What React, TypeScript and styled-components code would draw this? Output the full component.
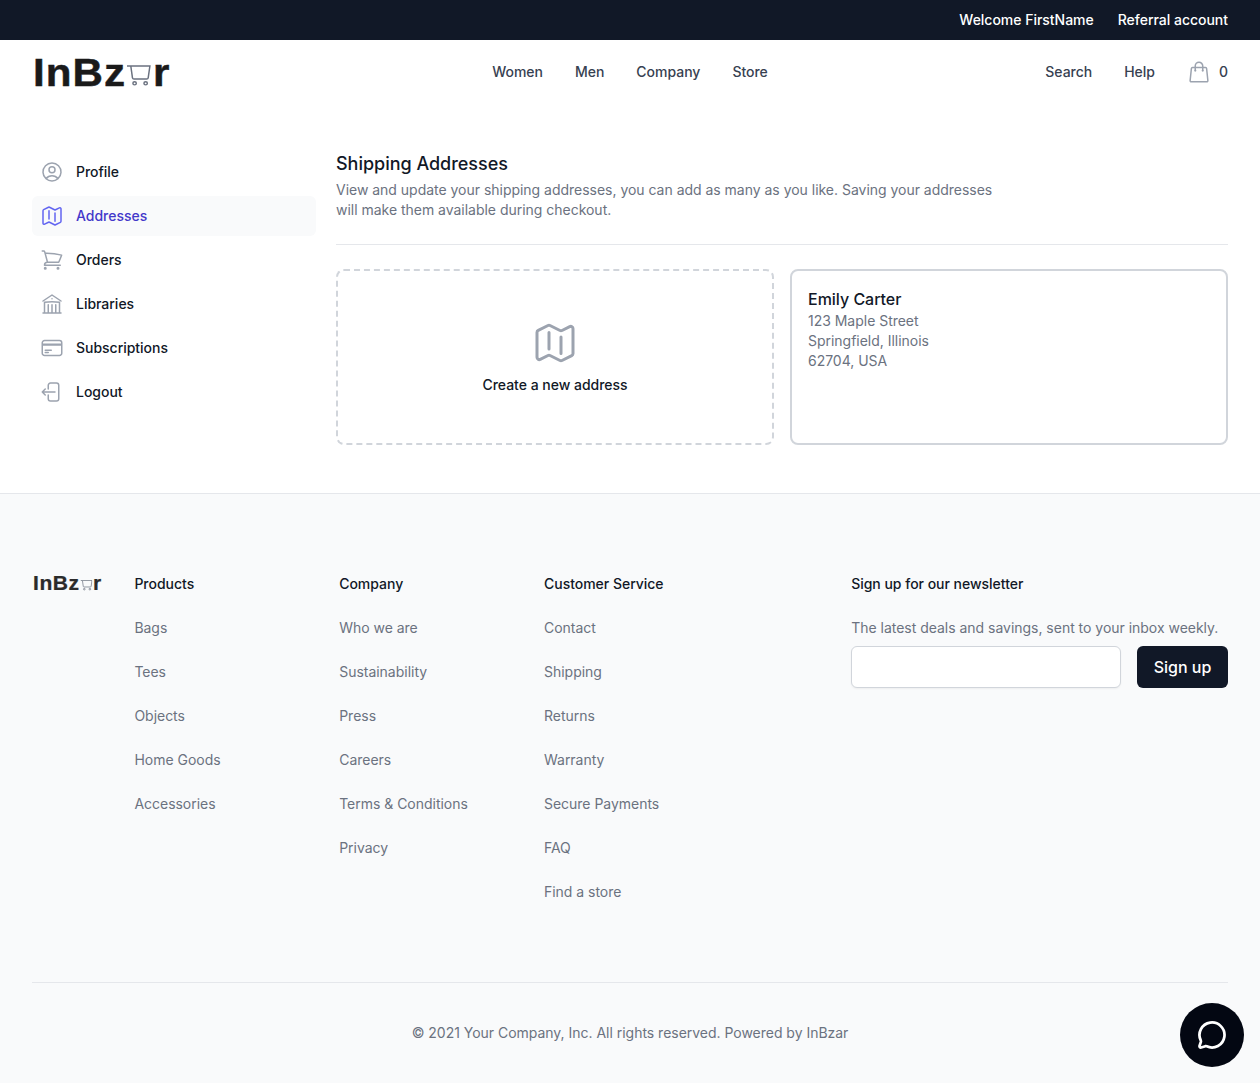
import styled, { createGlobalStyle } from 'styled-components';
import { MessageCircle } from 'lucide-react';
import {
  HiOutlineUserCircle,
  HiOutlineMap,
  HiOutlineShoppingCart,
  HiOutlineBuildingLibrary,
  HiOutlineCreditCard,
  HiOutlineArrowLeftStartOnRectangle,
  HiOutlineShoppingBag,
} from 'react-icons/hi2';

const GlobalStyle = createGlobalStyle`
  * { box-sizing: border-box; }
  body {
    margin: 0;
    background: #fff;
    font-family: Inter, "Liberation Sans", sans-serif;
    font-size: 14px;
    line-height: 20px;
    letter-spacing: -0.02px;
    color: #111827;
  }
  ul { list-style: none; margin: 0; padding: 0; }
  h1, h2, h3, p { margin: 0; }
`;

const TopBar = styled.div`
  height: 40px;
  background: #111827;
  display: flex;
  align-items: center;
  justify-content: flex-end;
  gap: 24px;
  padding: 0 32px;
  color: #fff;
  font-weight: 500;
`;

const Header = styled.header`
  height: 64px;
  padding: 0 32px;
  display: grid;
  grid-template-columns: 1fr auto 1fr;
  align-items: center;
`;

const NavGroup = styled.nav<{ $end?: boolean }>`
  display: flex;
  align-items: center;
  gap: 32px;
  font-weight: 500;
  color: #374151;
  justify-content: ${({ $end }) => ($end ? 'flex-end' : 'flex-start')};
`;

const Cart = styled.div`
  display: flex;
  align-items: center;
  gap: 8px;
  svg { color: #9ca3af; display: block; }
`;

const LogoMark = styled.div<{ $size: number; $tone: string }>`
  display: inline-flex;
  align-items: flex-end;
  font-family: "Liberation Sans", Arial, sans-serif;
  font-weight: 700;
  font-size: ${({ $size }) => $size}px;
  line-height: 1;
  letter-spacing: 0.025em;
  color: ${({ $tone }) => $tone};
  -webkit-text-stroke: 0.012em ${({ $tone }) => $tone};
  transform: scaleX(1.08);
  transform-origin: left center;
  margin-left: 1px;
  svg { width: 0.58em; height: 0.53em; margin: 0 0.03em 0.14em 0.03em; display: block; }
`;

const Layout = styled.main`
  display: grid;
  grid-template-columns: 284px 1fr;
  gap: 20px;
  padding: 48px 32px;
`;

const SideNav = styled.ul`
  display: flex;
  flex-direction: column;
  gap: 4px;
`;

const SideItem = styled.li<{ $active?: boolean }>`
  height: 40px;
  display: flex;
  align-items: center;
  gap: 12px;
  padding: 0 8px;
  border-radius: 6px;
  font-weight: 500;
  background: ${({ $active }) => ($active ? '#f9fafb' : 'transparent')};
  color: ${({ $active }) => ($active ? '#4338ca' : '#111827')};
  svg {
    display: block;
    color: ${({ $active }) => ($active ? '#6366f1' : '#9ca3af')};
  }
`;

const TitleBlock = styled.div`
  padding-bottom: 24px;
  border-bottom: 1px solid #e5e7eb;
  margin-bottom: 24px;
`;

const Title = styled.h1`
  font-size: 18px;
  line-height: 24px;
  font-weight: 500;
`;

const Lead = styled.p`
  margin-top: 4px;
  max-width: 672px;
  color: #6b7280;
`;

const Cards = styled.div`
  display: grid;
  grid-template-columns: 1fr 1fr;
  gap: 16px;
`;

const NewCard = styled.div`
  height: 176px;
  border: 2px dashed #d1d5db;
  border-radius: 8px;
  display: flex;
  flex-direction: column;
  align-items: center;
  justify-content: center;
  gap: 8px;
  font-weight: 500;
  svg { color: #9ca3af; display: block; }
`;

const AddressCard = styled.div`
  height: 176px;
  border: 2px solid #d1d5db;
  border-radius: 8px;
  padding: 16px;
  color: #6b7280;
`;

const AddressName = styled.h3`
  font-size: 16px;
  line-height: 24px;
  font-weight: 500;
  color: #111827;
`;

const Footer = styled.footer`
  background: #f9fafb;
  border-top: 1px solid #e5e7eb;
  padding: 80px 32px 40px;
`;

const FooterGrid = styled.div`
  display: grid;
  grid-template-columns: 102.4px repeat(3, 204.8px) 1fr;
  padding-bottom: 80px;
  border-bottom: 1px solid #e5e7eb;
`;

const FooterHeading = styled.h3`
  font-size: 14px;
  line-height: 20px;
  font-weight: 500;
  color: #111827;
`;

const LinkList = styled.ul`
  margin-top: 24px;
  display: flex;
  flex-direction: column;
  gap: 24px;
  color: #6b7280;
`;

const Newsletter = styled.div`
  padding-left: 102.4px;
`;

const NewsText = styled.p`
  margin-top: 24px;
  color: #6b7280;
  white-space: nowrap;
`;

const SignupForm = styled.div`
  margin-top: 8px;
  display: flex;
  gap: 16px;
`;

const EmailInput = styled.input`
  flex: 1;
  min-width: 0;
  height: 42px;
  background: #fff;
  border: 1px solid #d1d5db;
  border-radius: 6px;
  box-shadow: 0 1px 2px rgba(0, 0, 0, 0.05);
`;

const SignupButton = styled.button`
  width: 91px;
  height: 42px;
  border: 0;
  border-radius: 6px;
  background: #111827;
  color: #fff;
  font-family: inherit;
  font-size: 16px;
  font-weight: 500;
`;

const Copyright = styled.p`
  padding-top: 40px;
  text-align: center;
  color: #6b7280;
`;

const ChatButton = styled.div`
  position: fixed;
  right: 16px;
  bottom: 16px;
  width: 64px;
  height: 64px;
  border-radius: 50%;
  background: #030712;
  color: #fff;
  display: flex;
  align-items: center;
  justify-content: center;
`;

function Logo({ size, tone }: { size: number; tone: string }) {
  return (
    <LogoMark $size={size} $tone={tone}>
      InBz
      <svg viewBox="0 0 23 21" fill="none" stroke="#6b7280" strokeWidth="1.4">
        <path d="M0 1h3.6l1.6 12q.2 1.2 1.4 1.2h12q1.2 0 1.4-1.2L21.6 1H3.6" />
        <circle cx="7.2" cy="18.6" r="1.6" />
        <circle cx="17.6" cy="18.6" r="1.6" />
      </svg>
      r
    </LogoMark>
  );
}

const sideLinks = [
  { name: 'Profile', icon: HiOutlineUserCircle },
  { name: 'Addresses', icon: HiOutlineMap, active: true },
  { name: 'Orders', icon: HiOutlineShoppingCart },
  { name: 'Libraries', icon: HiOutlineBuildingLibrary },
  { name: 'Subscriptions', icon: HiOutlineCreditCard },
  { name: 'Logout', icon: HiOutlineArrowLeftStartOnRectangle },
];

const footerColumns = [
  { title: 'Products', links: ['Bags', 'Tees', 'Objects', 'Home Goods', 'Accessories'] },
  { title: 'Company', links: ['Who we are', 'Sustainability', 'Press', 'Careers', 'Terms & Conditions', 'Privacy'] },
  { title: 'Customer Service', links: ['Contact', 'Shipping', 'Returns', 'Warranty', 'Secure Payments', 'FAQ', 'Find a store'] },
];

export default function App() {
  return (
    <>
      <GlobalStyle />
      <TopBar>
        <span>Welcome FirstName</span>
        <span>Referral account</span>
      </TopBar>
      <Header>
        <Logo size={39} tone="#1a1a1a" />
        <NavGroup>
          <span>Women</span>
          <span>Men</span>
          <span>Company</span>
          <span>Store</span>
        </NavGroup>
        <NavGroup $end>
          <span>Search</span>
          <span>Help</span>
          <Cart>
            <HiOutlineShoppingBag size={24} />
            <span>0</span>
          </Cart>
        </NavGroup>
      </Header>
      <Layout>
        <SideNav>
          {sideLinks.map((link) => (
            <SideItem key={link.name} $active={link.active}>
              <link.icon size={24} />
              {link.name}
            </SideItem>
          ))}
        </SideNav>
        <section>
          <TitleBlock>
            <Title>Shipping Addresses</Title>
            <Lead>
              View and update your shipping addresses, you can add as many as you like. Saving your addresses will make
              them available during checkout.
            </Lead>
          </TitleBlock>
          <Cards>
            <NewCard>
              <HiOutlineMap size={48} />
              Create a new address
            </NewCard>
            <AddressCard>
              <AddressName>Emily Carter</AddressName>
              <p>123 Maple Street</p>
              <p>Springfield, Illinois</p>
              <p>62704, USA</p>
            </AddressCard>
          </Cards>
        </section>
      </Layout>
      <Footer>
        <FooterGrid>
          <div>
            <Logo size={19.5} tone="#2b2b2b" />
          </div>
          {footerColumns.map((col) => (
            <div key={col.title}>
              <FooterHeading>{col.title}</FooterHeading>
              <LinkList>
                {col.links.map((l) => (
                  <li key={l}>{l}</li>
                ))}
              </LinkList>
            </div>
          ))}
          <Newsletter>
            <FooterHeading>Sign up for our newsletter</FooterHeading>
            <NewsText>The latest deals and savings, sent to your inbox weekly.</NewsText>
            <SignupForm>
              <EmailInput type="text" />
              <SignupButton>Sign up</SignupButton>
            </SignupForm>
          </Newsletter>
        </FooterGrid>
        <Copyright>© 2021 Your Company, Inc. All rights reserved. Powered by InBzar</Copyright>
      </Footer>
      <ChatButton>
        <MessageCircle size={30} strokeWidth={2.2} />
      </ChatButton>
    </>
  );
}
